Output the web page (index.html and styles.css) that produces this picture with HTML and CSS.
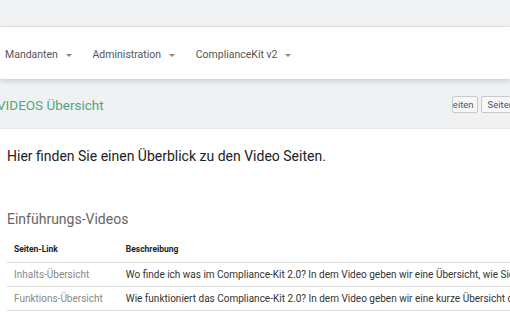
FILE: index.html
```html
<!DOCTYPE html>
<html lang="de">
<head>
    <meta charset="UTF-8">
    <title>VIDEOS Übersicht</title>
    <link rel="stylesheet" href="styles.css">
</head>
<body>
    <div class="topbar"></div>
    <nav class="navbar">
        <a class="nav-item">Mandanten <span class="caret"></span></a>
        <a class="nav-item">Administration <span class="caret"></span></a>
        <a class="nav-item">ComplianceKit v2 <span class="caret"></span></a>
    </nav>
    <div class="page-header">
        <h1 class="page-title">VIDEOS Übersicht</h1>
        <div class="header-buttons">
            <button class="btn btn-clip"><span>Seiten</span></button>
            <button class="btn">Seiten</button>
        </div>
    </div>
    <div class="content">
        <p class="intro">Hier finden Sie einen Überblick zu den Video Seiten.</p>
        <h2 class="section-title">Einführungs-Videos</h2>
        <table class="video-table">
            <thead>
                <tr>
                    <th class="col-link">Seiten-Link</th>
                    <th>Beschreibung</th>
                </tr>
            </thead>
            <tbody>
                <tr>
                    <td class="col-link"><a>Inhalts-Übersicht</a></td>
                    <td>Wo finde ich was im Compliance-Kit 2.0? In dem Video geben wir eine Übersicht, wie Sie sich im Compliance-Kit zurechtfinden.</td>
                </tr>
                <tr>
                    <td class="col-link"><a>Funktions-Übersicht</a></td>
                    <td>Wie funktioniert das Compliance-Kit 2.0? In dem Video geben wir eine kurze Übersicht der wichtigsten Funktionen.</td>
                </tr>
            </tbody>
        </table>
    </div>
</body>
</html>
```

FILE: styles.css
```css
body {
    margin: 0;
    font-family: Roboto, "Liberation Sans", sans-serif;
    background: #fff;
    color: #222;
    overflow: hidden;
}
.topbar {
    height: 26px;
    background: #f1f2f3;
    border-bottom: 1px solid #e3e4e6;
}
.navbar {
    position: relative;
    z-index: 1;
    height: 52px;
    box-sizing: border-box;
    padding: 3px 0 0 5px;
    background: #fff;
    display: flex;
    align-items: center;
    box-shadow: 0 2px 5px rgba(0, 0, 0, 0.16);
}
.nav-item {
    font-size: 10.5px;
    color: #555;
    margin-right: 21px;
    white-space: nowrap;
}
.caret {
    display: inline-block;
    margin-left: 5px;
    vertical-align: middle;
    border-left: 3px solid transparent;
    border-right: 3px solid transparent;
    border-top: 3px solid #888;
}
.page-header {
    height: 49px;
    background: #eff1f3;
    display: flex;
    align-items: center;
    justify-content: space-between;
    border-bottom: 1px solid #e8eaec;
}
.page-title {
    margin: 0 0 0 -3px;
    font-size: 13.5px;
    font-weight: 400;
    color: #4fa87c;
    padding-top: 3px;
}
.header-buttons {
    display: flex;
    gap: 3px;
    margin-right: -11px;
    padding-top: 2px;
}
.btn {
    font-family: inherit;
    font-size: 9.5px;
    color: #555;
    background: #f7f7f7;
    border: 1px solid #c9c9c9;
    border-radius: 2px;
    height: 17px;
    padding: 0 6px;
}
.btn-clip {
    width: 26px;
    padding: 0 3px 0 0;
    display: flex;
    align-items: center;
    justify-content: flex-end;
    overflow: hidden;
    white-space: nowrap;
}
.content {
    padding: 0 7px;
}
.intro {
    margin: 19px 0 0;
    font-size: 14px;
    color: #222;
}
.section-title {
    margin: 47px 0 0;
    font-size: 14px;
    font-weight: 400;
    color: #666;
}
.video-table {
    margin-top: 8px;
    border-collapse: collapse;
    white-space: nowrap;
    font-size: 10px;
}
.video-table th {
    text-align: left;
    font-size: 8.5px;
    font-weight: 700;
    color: #222;
    height: 27px;
    padding: 0 7px;
    border-bottom: 1px solid #ddd;
}
.video-table td {
    height: 23px;
    padding: 0 7px;
    border-bottom: 1px solid #ddd;
    color: #333;
}
.video-table .col-link {
    padding-right: 16px;
}
.video-table td a {
    font-size: 10px;
    color: #888;
}
```
